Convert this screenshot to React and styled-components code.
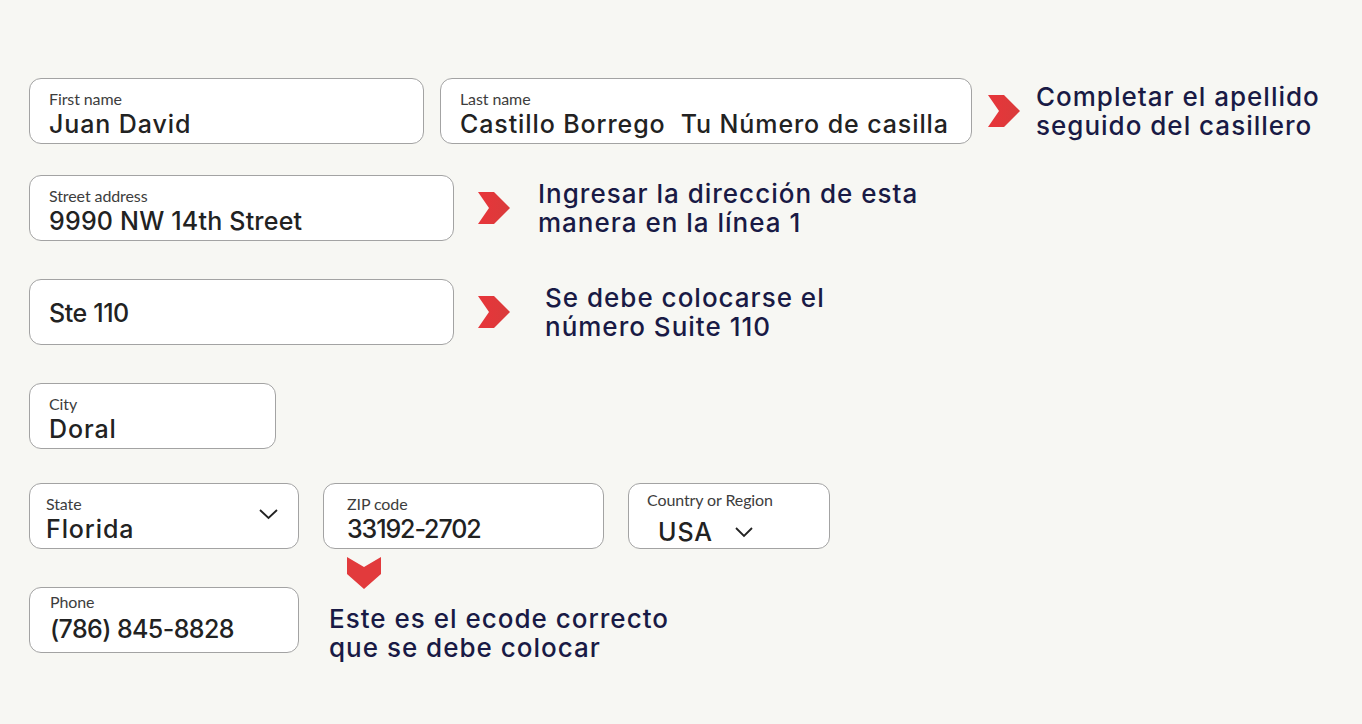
import React from "react";
import styled, { createGlobalStyle } from "styled-components";

const Global = createGlobalStyle`
  html, body { margin: 0; padding: 0; background: #f7f7f3; }
  body { font-family: Inter, "Noto Sans", sans-serif; }
`;

const Page = styled.div`
  width: 1362px;
  height: 724px;
  box-sizing: border-box;
  padding: 78px 0 0 29px;
  background: #f7f7f3;
  display: flex;
  flex-direction: column;
`;

const Row = styled.div`
  display: flex;
  align-items: ${(p) => (p.$top ? "flex-start" : "center")};
  margin-top: ${(p) => p.$mt || 0}px;
`;

const Box = styled.div`
  box-sizing: border-box;
  width: ${(p) => p.$w}px;
  height: 66px;
  margin-right: ${(p) => p.$mr || 0}px;
  background: #fff;
  border: 1px solid #a3a3a3;
  border-radius: 12px;
  padding: ${(p) => p.$pt ?? 10}px 18px 0 ${(p) => p.$pl || 19}px;
  display: flex;
  align-items: ${(p) => (p.$center ? "center" : "stretch")};
  position: relative;
  flex-shrink: 0;
`;

const FieldBody = styled.div`
  display: flex;
  flex-direction: column;
  flex: 1;
`;

const Label = styled.div`
  font-family: Lato, "Open Sans", sans-serif;
  font-size: 16px;
  line-height: 19px;
  color: #3d3d3d;
  letter-spacing: -0.1px;
`;

const Value = styled.div`
  font-family: Inter, "Noto Sans", sans-serif;
  font-weight: 500;
  font-size: 25px;
  line-height: 28px;
  letter-spacing: ${(p) => p.$ls ?? 0.9}px;
  color: #222;
  margin-top: ${(p) => p.$mt ?? 2}px;
  margin-left: ${(p) => p.$ml || 0}px;
  display: flex;
  align-items: center;
  gap: ${(p) => p.$gap || 0}px;
  white-space: pre;
`;

const Chevron = styled.svg`
  position: absolute;
  right: 20px;
  top: 24px;
`;

const Arrow = styled.svg`
  flex-shrink: 0;
  margin-left: ${(p) => p.$ml || 0}px;
  margin-right: ${(p) => p.$mr || 0}px;
`;

const Note = styled.div`
  font-family: Inter, "Noto Sans", sans-serif;
  font-weight: 500;
  font-size: 26px;
  line-height: 29px;
  color: #191a45;
  letter-spacing: 1px;
`;

const NoteColumn = styled.div`
  display: flex;
  flex-direction: column;
  margin-top: -30px;
`;

const DownWrap = styled.div`
  padding-left: 18px;
  margin-bottom: 11px;
`;

const RightArrow = ({ ml, mr }) => (
  <Arrow $ml={ml} $mr={mr} width="32" height="32" viewBox="0 0 32 32">
    <defs>
      <linearGradient id="rg" x1="0" y1="0" x2="1" y2="0">
        <stop offset="0" stopColor="#e8353a" />
        <stop offset="1" stopColor="#d93b3b" />
      </linearGradient>
    </defs>
    <polygon points="0,0 16,0 32,16 16,32 0,32 11,16" fill="url(#rg)" />
  </Arrow>
);

const DownArrow = () => (
  <svg width="34" height="32" viewBox="0 0 34 32">
    <polygon points="0,0 17,10 34,0 34,17 17,32 0,17" fill="#e23a3c" />
  </svg>
);

const ChevronDown = ({ inline }) =>
  inline ? (
    <svg width="18" height="12" viewBox="0 0 18 12">
      <polyline points="1,2 9,10 17,2" fill="none" stroke="#222" strokeWidth="1.8" />
    </svg>
  ) : (
    <Chevron width="19" height="12" viewBox="0 0 19 12">
      <polyline points="1,2 9.5,10 18,2" fill="none" stroke="#222" strokeWidth="1.8" />
    </Chevron>
  );

const Field = ({ w, mr, pl, pt, vmt, ls, label, value, select }) => (
  <Box $w={w} $mr={mr} $pl={pl} $pt={pt}>
    <FieldBody>
      <Label>{label}</Label>
      <Value $mt={vmt} $ls={ls}>{value}</Value>
    </FieldBody>
    {select && <ChevronDown />}
  </Box>
);

export default function App() {
  return (
    <>
      <Global />
      <Page>
        <Row>
          <Field w={395} mr={16} label="First name" value="Juan David" />
          <Field w={532} label="Last name" value="Castillo Borrego  Tu Número de casilla" />
          <RightArrow ml={16} mr={16} />
          <Note>
            Completar el apellido
            <br />
            seguido del casillero
          </Note>
        </Row>

        <Row $mt={31}>
          <Field w={425} ls={0.2} label="Street address" value="9990 NW 14th Street" />
          <RightArrow ml={24} mr={28} />
          <Note>
            Ingresar la dirección de esta
            <br />
            manera en la línea 1
          </Note>
        </Row>

        <Row $mt={38}>
          <Box $w={425} $center>
            <Value $mt={-8} $ls={-0.4}>Ste 110</Value>
          </Box>
          <RightArrow ml={24} mr={35} />
          <Note>
            Se debe colocarse el
            <br />
            número Suite 110
          </Note>
        </Row>

        <Row $mt={38}>
          <Field w={247} label="City" value="Doral" />
        </Row>

        <Row $mt={34}>
          <Field w={270} mr={24} pl={16} label="State" value="Florida" select />
          <Field w={281} mr={24} pl={23} ls={-1.1} label="ZIP code" value="33192-2702" />
          <Box $w={202} $pl={18} $pt={6}>
            <FieldBody>
              <Label>Country or Region</Label>
              <Value $mt={9} $ml={11} $gap={22}>
                USA
                <ChevronDown inline />
              </Value>
            </FieldBody>
          </Box>
        </Row>

        <Row $mt={38} $top>
          <Field w={270} mr={30} pl={20} pt={4} vmt={4} ls={-0.6} label="Phone" value="(786) 845-8828" />
          <NoteColumn>
            <DownWrap>
              <DownArrow />
            </DownWrap>
            <Note>
              Este es el ecode correcto
              <br />
              que se debe colocar
            </Note>
          </NoteColumn>
        </Row>
      </Page>
    </>
  );
}
